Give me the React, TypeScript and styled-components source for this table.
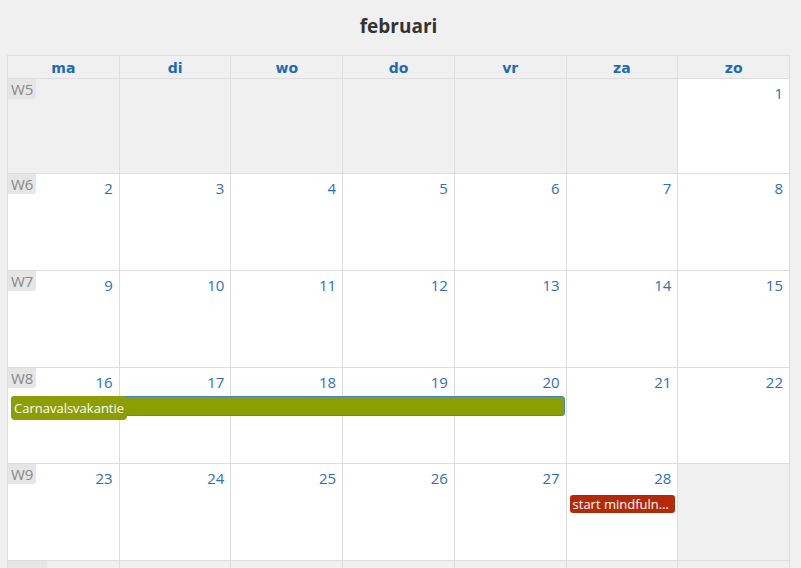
import React from "react";
import styled, { createGlobalStyle } from "styled-components";

const Global = createGlobalStyle`
  html, body { margin: 0; padding: 0; background: #f0f0f0; overflow: hidden; }
  body { font-family: "Open Sans", "Noto Sans", sans-serif; }
`;

const Page = styled.div`
  width: 801px;
  height: 568px;
  overflow: hidden;
  padding-left: 7px;
  box-sizing: border-box;
`;

const Title = styled.h2`
  margin: 0;
  width: 783px;
  height: 55px;
  display: flex;
  align-items: center;
  justify-content: center;
  font-size: 19px;
  font-weight: 700;
  color: #333;
  padding-bottom: 4px;
  box-sizing: border-box;
`;

const Grid = styled.div`
  width: 783px;
  border-left: 1px solid #ddd;
  border-top: 1px solid #ddd;
  box-sizing: border-box;
`;

const HeaderRow = styled.div`
  display: grid;
  grid-template-columns: repeat(7, 1fr);
`;

const HeaderCell = styled.div`
  height: 23px;
  border-right: 1px solid #ddd;
  border-bottom: 1px solid #ddd;
  display: flex;
  align-items: center;
  justify-content: center;
  padding-top: 1px;
  box-sizing: border-box;
  font-family: "DejaVu Sans", sans-serif;
  font-weight: 700;
  font-size: 14px;
  color: #1f6bb3;
`;

const WeekRow = styled.div<{ $h: number }>`
  display: grid;
  grid-template-columns: repeat(7, 1fr);
  grid-template-rows: 28px auto 1fr;
  height: ${(p) => p.$h}px;
  position: relative;
`;

const Cell = styled.div<{ $col: number; $muted?: boolean }>`
  grid-column: ${(p) => p.$col};
  grid-row: 1 / -1;
  background: ${(p) => (p.$muted ? "#f0f0f0" : "#fff")};
  border-right: 1px solid #ddd;
  border-bottom: 1px solid #ddd;
  display: flex;
  justify-content: flex-end;
  align-items: flex-start;
  padding: 4px 6px 0 0;
  box-sizing: border-box;
  position: relative;
`;

const DayNum = styled.span`
  font-size: 15px;
  line-height: 20px;
  color: #2f6fb5;
`;

const WeekBadge = styled.span<{ $minW?: number }>`
  position: absolute;
  left: 0;
  top: 0;
  min-width: ${(p) => p.$minW ?? 0}px;
  min-height: 20px;
  background: #e6e6e6;
  color: #888;
  font-size: 15px;
  line-height: 20px;
  padding: 0 3px;
  border-bottom-right-radius: 3px;
`;

const EventBar = styled.div<{ $from: number; $span: number; $color: string; $top: number; $right: number }>`
  grid-column: ${(p) => p.$from} / span ${(p) => p.$span};
  grid-row: 2;
  margin: ${(p) => p.$top}px ${(p) => p.$right}px 0 3px;
  background: ${(p) => p.$color};
  color: #fff;
  font-size: 13px;
  line-height: 16px;
  height: 18px;
  border-radius: 3px;
  position: relative;
  z-index: 1;
  box-sizing: border-box;
  white-space: nowrap;
  overflow: hidden;
  padding: 1px 3px;
`;

const SelectedBar = styled(EventBar)`
  border: 1px solid #3a86d4;
  height: 20px;
  overflow: visible;
  padding: 0;
`;

const BarLabel = styled.span<{ $color: string }>`
  position: absolute;
  left: -1px;
  top: -1px;
  height: 24px;
  line-height: 24px;
  padding: 0 3px;
  background: ${(p) => p.$color};
  border-radius: 4px;
  color: #fff;
  font-size: 13px;
`;

type Day = { n?: number; muted?: boolean };

const weeks: { w: string; h: number; days: Day[] }[] = [
  { w: "W5", h: 95, days: [{ muted: true }, { muted: true }, { muted: true }, { muted: true }, { muted: true }, { muted: true }, { n: 1 }] },
  { w: "W6", h: 97, days: [2, 3, 4, 5, 6, 7, 8].map((n) => ({ n })) },
  { w: "W7", h: 97, days: [9, 10, 11, 12, 13, 14, 15].map((n) => ({ n })) },
  { w: "W8", h: 96, days: [16, 17, 18, 19, 20, 21, 22].map((n) => ({ n })) },
  { w: "W9", h: 97, days: [23, 24, 25, 26, 27, 28].map((n) => ({ n } as Day)).concat([{ muted: true }]) },
  { w: "", h: 97, days: Array.from({ length: 7 }, () => ({ muted: true })) },
];

const headers = ["ma", "di", "wo", "do", "vr", "za", "zo"];
const green = "#8c9e04";
const red = "#b32a08";

export default function App() {
  return (
    <>
      <Global />
      <Page>
        <Title>februari</Title>
        <Grid>
          <HeaderRow>
            {headers.map((h) => (
              <HeaderCell key={h}>{h}</HeaderCell>
            ))}
          </HeaderRow>
          {weeks.map((wk, i) => (
            <WeekRow key={i} $h={wk.h}>
              {wk.days.map((d, c) => (
                <Cell key={c} $col={c + 1} $muted={d.muted}>
                  {c === 0 && <WeekBadge $minW={wk.w ? 0 : 33}>{wk.w}</WeekBadge>}
                  {d.n !== undefined && <DayNum>{d.n}</DayNum>}
                </Cell>
              ))}
              {i === 3 && (
                <SelectedBar $from={1} $span={5} $color={green} $top={0} $right={2}>
                  <BarLabel $color={green}>Carnavalsvakantie</BarLabel>
                </SelectedBar>
              )}
              {i === 4 && (
                <EventBar $from={6} $span={1} $color={red} $top={3} $right={3}>
                  start mindfuln…
                </EventBar>
              )}
            </WeekRow>
          ))}
        </Grid>
      </Page>
    </>
  );
}
